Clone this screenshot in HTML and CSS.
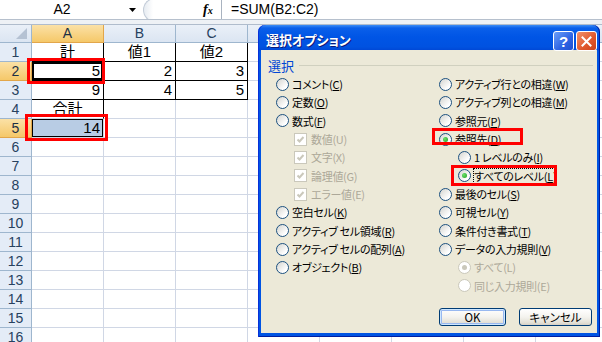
FILE: index.html
```html
<!DOCTYPE html>
<html lang="ja">
<head>
    <meta charset="UTF-8">
    <meta name="viewport" content="width=device-width, initial-scale=1.0">
    <title>選択オプション</title>
    <link rel="stylesheet" href="styles.css">
</head>
<body>
    <div class="formula-bar">
        <div class="name-box">A2</div>
        <div class="name-arrow"><svg width="7" height="4" viewBox="0 0 7 4"><path d="M0 0h7L3.5 4z" fill="#000"/></svg></div>
        <div class="grip"></div>
        <div class="fx"><i>f</i><i class="fx-x">x</i></div>
        <div class="formula">=SUM(B2:C2)</div>
    </div>
    <div class="splitter"></div>

    <div class="sheet">
        <div class="corner"></div>
        <div class="col-head is-sel">A</div>
        <div class="col-head">B</div>
        <div class="col-head">C</div>
        <div class="col-head"></div>
        <div class="col-head"></div>
        <div class="col-head"></div>
        <div class="col-head"></div>
        <div class="col-head"></div>

        <div class="row-head">1</div>
        <div class="cell boxed center">計</div>
        <div class="cell boxed center">値1</div>
        <div class="cell boxed center">値2</div>
        <div class="cell"></div><div class="cell"></div><div class="cell"></div><div class="cell"></div><div class="cell"></div>

        <div class="row-head is-sel">2</div>
        <div class="cell boxed active">5</div>
        <div class="cell boxed">2</div>
        <div class="cell boxed">3</div>
        <div class="cell"></div><div class="cell"></div><div class="cell"></div><div class="cell"></div><div class="cell"></div>

        <div class="row-head">3</div>
        <div class="cell boxed">9</div>
        <div class="cell boxed">4</div>
        <div class="cell boxed">5</div>
        <div class="cell"></div><div class="cell"></div><div class="cell"></div><div class="cell"></div><div class="cell"></div>

        <div class="row-head">4</div>
        <div class="cell side center">合計</div>
        <div class="cell"></div><div class="cell"></div><div class="cell"></div><div class="cell"></div><div class="cell"></div><div class="cell"></div><div class="cell"></div>

        <div class="row-head is-sel">5</div>
        <div class="cell picked">14</div>
        <div class="cell"></div><div class="cell"></div><div class="cell"></div><div class="cell"></div><div class="cell"></div><div class="cell"></div><div class="cell"></div>

        <div class="row-head">6</div>
        <div class="cell"></div><div class="cell"></div><div class="cell"></div><div class="cell"></div><div class="cell"></div><div class="cell"></div><div class="cell"></div><div class="cell"></div>
        <div class="row-head">7</div>
        <div class="cell"></div><div class="cell"></div><div class="cell"></div><div class="cell"></div><div class="cell"></div><div class="cell"></div><div class="cell"></div><div class="cell"></div>
        <div class="row-head">8</div>
        <div class="cell"></div><div class="cell"></div><div class="cell"></div><div class="cell"></div><div class="cell"></div><div class="cell"></div><div class="cell"></div><div class="cell"></div>
        <div class="row-head">9</div>
        <div class="cell"></div><div class="cell"></div><div class="cell"></div><div class="cell"></div><div class="cell"></div><div class="cell"></div><div class="cell"></div><div class="cell"></div>
        <div class="row-head">10</div>
        <div class="cell"></div><div class="cell"></div><div class="cell"></div><div class="cell"></div><div class="cell"></div><div class="cell"></div><div class="cell"></div><div class="cell"></div>
        <div class="row-head">11</div>
        <div class="cell"></div><div class="cell"></div><div class="cell"></div><div class="cell"></div><div class="cell"></div><div class="cell"></div><div class="cell"></div><div class="cell"></div>
        <div class="row-head">12</div>
        <div class="cell"></div><div class="cell"></div><div class="cell"></div><div class="cell"></div><div class="cell"></div><div class="cell"></div><div class="cell"></div><div class="cell"></div>
        <div class="row-head">13</div>
        <div class="cell"></div><div class="cell"></div><div class="cell"></div><div class="cell"></div><div class="cell"></div><div class="cell"></div><div class="cell"></div><div class="cell"></div>
        <div class="row-head">14</div>
        <div class="cell"></div><div class="cell"></div><div class="cell"></div><div class="cell"></div><div class="cell"></div><div class="cell"></div><div class="cell"></div><div class="cell"></div>
        <div class="row-head">15</div>
        <div class="cell"></div><div class="cell"></div><div class="cell"></div><div class="cell"></div><div class="cell"></div><div class="cell"></div><div class="cell"></div><div class="cell"></div>
        <div class="row-head">16</div>
        <div class="cell"></div><div class="cell"></div><div class="cell"></div><div class="cell"></div><div class="cell"></div><div class="cell"></div><div class="cell"></div><div class="cell"></div>
    </div>

    <div class="dialog">
        <div class="title-bar">
            <span class="title">選択オプション</span>
            <span class="cap-btn help">?</span>
            <span class="cap-btn close"><svg width="11" height="11" viewBox="0 0 11 11"><path d="M1.5 1.5l8 8M9.5 1.5l-8 8" stroke="#fff" stroke-width="2" stroke-linecap="square"/></svg></span>
        </div>
        <div class="dialog-body">
            <div class="group-head"><span>選択</span></div>
            <div class="options">
                <div class="col col-left">
                    <div class="opt"><span class="radio"></span><span class="lbl">コメント(<u>C</u>)</span></div>
                    <div class="opt"><span class="radio"></span><span class="lbl">定数(<u>O</u>)</span></div>
                    <div class="opt"><span class="radio"></span><span class="lbl">数式(<u>F</u>)</span></div>
                    <div class="opt sub off"><span class="check"><svg width="11" height="11" viewBox="0 0 11 11"><path d="M2.5 5.5l2 2 4-4.5" fill="none" stroke="#cac8bb" stroke-width="2"/></svg></span><span class="lbl">数値(U)</span></div>
                    <div class="opt sub off"><span class="check"><svg width="11" height="11" viewBox="0 0 11 11"><path d="M2.5 5.5l2 2 4-4.5" fill="none" stroke="#cac8bb" stroke-width="2"/></svg></span><span class="lbl">文字(X)</span></div>
                    <div class="opt sub off"><span class="check"><svg width="11" height="11" viewBox="0 0 11 11"><path d="M2.5 5.5l2 2 4-4.5" fill="none" stroke="#cac8bb" stroke-width="2"/></svg></span><span class="lbl">論理値(G)</span></div>
                    <div class="opt sub off"><span class="check"><svg width="11" height="11" viewBox="0 0 11 11"><path d="M2.5 5.5l2 2 4-4.5" fill="none" stroke="#cac8bb" stroke-width="2"/></svg></span><span class="lbl">エラー値(E)</span></div>
                    <div class="opt"><span class="radio"></span><span class="lbl">空白セル(<u>K</u>)</span></div>
                    <div class="opt"><span class="radio"></span><span class="lbl">アクティブ&nbsp;セル領域(<u>R</u>)</span></div>
                    <div class="opt"><span class="radio"></span><span class="lbl">アクティブ&nbsp;セルの配列(<u>A</u>)</span></div>
                    <div class="opt"><span class="radio"></span><span class="lbl">オブジェクト(<u>B</u>)</span></div>
                </div>
                <div class="col">
                    <div class="opt"><span class="radio"></span><span class="lbl">アクティブ行との相違(<u>W</u>)</span></div>
                    <div class="opt"><span class="radio"></span><span class="lbl">アクティブ列との相違(<u>M</u>)</span></div>
                    <div class="opt"><span class="radio"></span><span class="lbl">参照元(<u>P</u>)</span></div>
                    <div class="opt"><span class="radio on"></span><span class="lbl">参照先(<u>D</u>)</span></div>
                    <div class="opt sub-r"><span class="radio"></span><span class="lbl">1&nbsp;レベルのみ(<u>I</u>)</span></div>
                    <div class="opt sub-r"><span class="radio on"></span><span class="lbl focus">すべてのレベル(<u>L</u>)</span></div>
                    <div class="opt"><span class="radio"></span><span class="lbl">最後のセル(<u>S</u>)</span></div>
                    <div class="opt"><span class="radio"></span><span class="lbl">可視セル(<u>Y</u>)</span></div>
                    <div class="opt"><span class="radio"></span><span class="lbl">条件付き書式(<u>T</u>)</span></div>
                    <div class="opt"><span class="radio"></span><span class="lbl">データの入力規則(<u>V</u>)</span></div>
                    <div class="opt sub-r off"><span class="radio on"></span><span class="lbl">すべて(L)</span></div>
                    <div class="opt sub-r off"><span class="radio"></span><span class="lbl">同じ入力規則(E)</span></div>
                </div>
            </div>
            <div class="buttons">
                <button class="btn default">OK</button>
                <button class="btn">キャンセル</button>
            </div>
        </div>
    </div>

    <div class="mark" style="left: 27px; top: 58px; width: 78px; height: 26px;"></div>
    <div class="mark" style="left: 25px; top: 114px; width: 83px; height: 27px;"></div>
    <div class="mark" style="left: 432px; top: 128px; width: 91px; height: 17px;"></div>
    <div class="mark" style="left: 451px; top: 165px; width: 106px; height: 21px;"></div>
</body>
</html>
```

FILE: styles.css
```css
body {
    margin: 0;
    width: 602px;
    height: 342px;
    overflow: hidden;
    position: relative;
    background-color: #fff;
    font-family: "Noto Sans CJK JP", sans-serif;
    color: #000;
}

/* formula bar */
.formula-bar {
    display: flex;
    align-items: center;
    height: 20px;
    box-sizing: border-box;
    border-bottom: 1px solid #b6c0cd;
    font-family: "Liberation Sans", sans-serif;
    font-size: 14px;
    overflow: hidden;
}
.name-box {
    width: 124px;
    text-align: center;
    line-height: 19px;
}
.name-arrow {
    width: 17px;
    display: flex;
    justify-content: center;
}
.grip {
    width: 14px;
    height: 24px;
    margin-left: 2px;
    box-sizing: border-box;
    border: 1px solid #c3ccd8;
    border-right: none;
    border-radius: 12px 0 0 12px;
    background: linear-gradient(90deg, #e6ebf1, #fff 70%);
}
.fx {
    margin-left: 46px;
    width: 19px;
    height: 19px;
    box-sizing: border-box;
    border-right: 1px solid #a9b3c0;
    font-family: "Liberation Serif", serif;
    font-weight: bold;
    font-size: 14px;
    line-height: 19px;
}
.fx-x {
    font-size: 10px;
}
.formula {
    padding-left: 9px;
    line-height: 19px;
}
.splitter {
    height: 5px;
    box-sizing: border-box;
    background-color: #eef1f5;
    border-bottom: 1px solid #b0bccc;
}

/* sheet grid */
.sheet {
    display: grid;
    grid-template-columns: 32px repeat(8, 72px);
    grid-template-rows: 18px;
    grid-auto-rows: 19px;
    font-family: "Liberation Sans", "Noto Sans CJK JP", sans-serif;
}
.corner, .col-head, .row-head {
    box-sizing: border-box;
    border-right: 1px solid #9eb6ce;
    border-bottom: 1px solid #9eb6ce;
    background: linear-gradient(#eaf0f8, #dbe5f2);
    color: #27415f;
    text-align: center;
    font-size: 14px;
}
.corner {
    position: relative;
}
.corner::after {
    content: '';
    position: absolute;
    right: 4px;
    bottom: 3px;
    border-left: 11px solid transparent;
    border-bottom: 11px solid #b5c2d3;
}
.col-head {
    line-height: 17px;
}
.row-head {
    line-height: 18px;
    background: #e4ecf7;
}
.col-head.is-sel, .row-head.is-sel {
    background: linear-gradient(#fbe1a6, #f5c869);
    border-color: #e2a64a;
    color: #1c2f45;
}
.cell {
    box-sizing: border-box;
    border-right: 1px solid #d0d7e5;
    border-bottom: 1px solid #d0d7e5;
    padding: 0 3px;
    line-height: 18px;
    font-size: 15px;
    text-align: right;
    white-space: nowrap;
}
.cell.center {
    text-align: center;
}
.cell.boxed {
    border-color: #000;
}
.cell.side {
    border-right-color: #000;
}
.cell.active {
    box-shadow: inset 0 0 0 2px #000;
}
.cell.picked {
    background-color: #b8cce4;
    box-shadow: inset 1px 1px 0 #000, inset -1px -1px 0 #000;
}

/* dialog */
.dialog {
    position: absolute;
    left: 258px;
    top: 25px;
    width: 342px;
    height: 312px;
    box-sizing: border-box;
    padding: 0 3px 4px 3px;
    border-radius: 7px 7px 0 0;
    background: linear-gradient(#3d8df5 0, #0a5fea 3px, #0055e5 12px, #0052e0 22px, #0048d6 25px, #0054e3 26px);
    box-shadow: inset 1px 0 0 #0831d9, inset -1px 0 0 #001ea0, inset 0 -1px 0 #001ea0;
    display: flex;
    flex-direction: column;
}
.title-bar {
    height: 25px;
    display: flex;
    align-items: flex-start;
    padding-left: 5px;
}
.title {
    flex: 1;
    margin-top: 6px;
    color: #fff;
    font-weight: bold;
    font-size: 13px;
    line-height: 17px;
    font-feature-settings: "palt";
    text-shadow: 1px 1px 0 #0a1a7a;
}
.cap-btn {
    width: 21px;
    height: 20px;
    margin-top: 6px;
    margin-left: 2px;
    box-sizing: border-box;
    border: 1px solid #fff;
    border-radius: 3px;
    display: flex;
    align-items: center;
    justify-content: center;
    position: relative;
    z-index: 1;
}
.help {
    background: linear-gradient(135deg, #6a9ef9, #2d63e3 60%, #1f4fd0);
    color: #fff;
    font-family: "Liberation Sans", sans-serif;
    font-weight: bold;
    font-size: 15px;
    line-height: 17px;
}
.close {
    background: linear-gradient(135deg, #f0916b, #e0572c 60%, #c9421c);
}
.dialog-body {
    flex: 1;
    background-color: #ece9d8;
    padding: 7px 4px 0 7px;
    display: flex;
    flex-direction: column;
    font-size: 11px;
    letter-spacing: -0.3px;
    font-feature-settings: "palt";
}
.group-head {
    display: flex;
    align-items: center;
    height: 16px;
    color: #0046d5;
    font-size: 13px;
    letter-spacing: 0;
}
.group-head::after {
    content: '';
    flex: 1;
    margin-left: 5px;
    border-top: 1px solid #d0d0bf;
}
.options {
    display: flex;
    margin-top: 2px;
    padding-left: 8px;
}
.col-left {
    width: 163px;
}
.opt {
    display: flex;
    align-items: center;
    height: 18.33px;
    white-space: nowrap;
}
.opt.sub {
    padding-left: 18px;
}
.opt.sub-r {
    padding-left: 19px;
}
.lbl {
    margin-left: 3px;
    line-height: 14px;
}
.lbl u {
    text-underline-offset: 1px;
}
.opt.off .lbl {
    color: #aca899;
}
.sub .lbl {
    margin-left: 4px;
}
.lbl.focus {
    outline: 1px dotted #000;
}
.radio {
    flex: none;
    position: relative;
    width: 13px;
    height: 13px;
    box-sizing: border-box;
    border: 1px solid #1c5180;
    border-radius: 50%;
    background: linear-gradient(135deg, #d4d4cf, #fff 75%);
}
.radio.on::after {
    content: '';
    position: absolute;
    left: 3px;
    top: 3px;
    width: 5px;
    height: 5px;
    border-radius: 50%;
    background: radial-gradient(circle at 35% 35%, #6be06b, #21a121);
}
.off .radio {
    border-color: #cac8bb;
    background: #fff;
}
.off .radio.on::after {
    background: #cac8bb;
}
.check {
    flex: none;
    width: 13px;
    height: 13px;
    box-sizing: border-box;
    border: 1px solid #cac8bb;
    background-color: #fff;
    display: flex;
}
.buttons {
    margin-top: auto;
    margin-bottom: 7px;
    display: flex;
    justify-content: flex-end;
    gap: 13px;
    padding-right: 1px;
}
.btn {
    height: 18px;
    padding: 0;
    border: 1px solid #003c74;
    border-radius: 3px;
    background: linear-gradient(#fff, #f4f3ee 50%, #e3e0d6 85%, #d6d0c5);
    font-family: "Noto Sans CJK JP", sans-serif;
    font-size: 11.5px;
    font-feature-settings: "palt";
    line-height: 14px;
    color: #000;
}
.btn.default {
    width: 67px;
    box-shadow: inset 0 0 0 1px #cee7ff, inset 0 0 0 2px #98b8f0;
}
.btn:not(.default) {
    width: 73px;
}

/* red annotation frames */
.mark {
    position: absolute;
    box-sizing: border-box;
    border: 3px solid #f00;
}
```
